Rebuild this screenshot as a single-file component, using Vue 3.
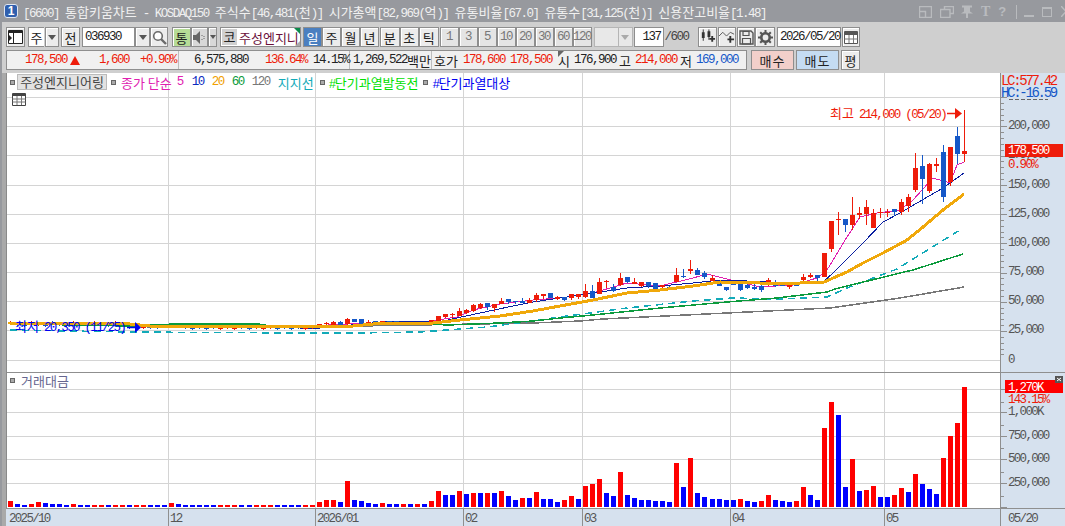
<script setup>
const barX = (i) => 10.5 + 7.015 * i

// title pieces, latin ones run in the half width font
const titleParts = [
  ['[6600] ', 1], ['통합키움차트', 0], [' - KOSDAQ150 ', 1], ['주식수', 0], ['[46,481(', 1], ['천', 0], [')] ', 1],
  ['시가총액', 0], ['[82,969(', 1], ['억', 0], [')] ', 1], ['유통비율', 0], ['[67.0] ', 1], ['유통수', 0], ['[31,125(', 1], ['천', 0], [')] ', 1],
  ['신용잔고비율', 0], ['[1.48]', 1],
]

// volume in 1/3 px, positive = up day, negative = down day
const vol = [
  18, -9, -6, 9, 15, -12, -9, -9, -6, 9, -6, -6, 6, 6, -6, 6, 6, -6, 6, 6, -6, -6, -6, 12, -9, -6, -6, -6, -6, -6, 6, 6, 6, -6, -6, 6, 6, 6, -6, -6, -6, -6, 6, 6,
  15, 21, 21, -15, 78, -21, -18, -12, -9, 12, -9, -9,
  9, -9, 9, -9, 18, 48, -36, -36, 48, -39, 42, -42, 42, -42, 48, -33, -21, 27, -27, 45, -24, -24, -15, 21, 33, -24, 63, 69, 84, -42, -33, 105, -36, -27, -21, -21, -18, -18, -15,
  132, -60, 147, -42, -30, -24, -24, -21, -21, 24, -18, -15, 18, 36, -21, -18, -15, 18,
  60, -36, -21, 237, 315, -276, -60, 144, -48, 51, 63, -30, -30, 36, 57, -45, 99, -69, -54, -39, 147, 213, 252, 360,
]
const volBars = vol.map((v, i) => ({
  x: Math.round(barX(i) - 2.5),
  y: 507 - Math.abs(v) / 3,
  h: Math.abs(v) / 3,
  color: v > 0 ? '#ff0000' : '#0000ff',
}))

// [top, bottom, high, low, colour] measured on three crops
const mkCandles = (list, start, base) =>
  list.map((c, k) => ({ i: start + k, top: base + c[0] / 3, bot: base + c[1] / 3, hi: base + c[2] / 3, lo: base + c[3] / 3, up: c[4] === 'r' }))

const early = mkCandles([
  [132, 144, 132, 144, 'r'], [129, 132, 126, 135, 'r'], [126, 135, 123, 135, 'r'], [126, 135, 123, 135, 'b'], [117, 132, 114, 135, 'r'],
  [117, 126, 117, 126, 'b'], [117, 132, 117, 132, 'b'], [125, 128, 120, 132, 'r'], [123, 129, 123, 129, 'b'], [124, 129, 124, 129, 'r'],
  [123, 132, 123, 132, 'b'], [123, 132, 123, 132, 'b'], [126, 135, 126, 135, 'b'], [129, 135, 129, 135, 'r'], [129, 131, 129, 135, 'r'],
  [126, 129, 126, 135, 'b'], [120, 129, 120, 132, 'r'], [108, 123, 108, 129, 'r'], [102, 111, 102, 114, 'r'], [101, 103, 99, 114, 'r'],
  [93, 108, 84, 108, 'r'], [90, 100, 87, 102, 'r'], [75, 93, 72, 96, 'r'], [72, 84, 69, 87, 'r'], [69, 81, 69, 90, 'b'],
  [72, 84, 72, 96, 'r'], [63, 72, 54, 72, 'r'], [57, 66, 57, 72, 'b'], [63, 66, 63, 72, 'b'], [63, 69, 54, 69, 'b'],
  [60, 69, 54, 69, 'r'], [45, 60, 39, 66, 'r'], [42, 48, 42, 57, 'r'], [39, 54, 39, 54, 'b'], [51, 57, 48, 60, 'r'],
], 44, 280)

const middle = mkCandles([
  [142, 149, 140, 152, 'b'], [132, 144, 132, 149, 'r'], [132, 140, 132, 146, 'r'], [123, 140, 102, 144, 'r'], [123, 143, 105, 143, 'b'],
  [96, 132, 84, 132, 'r'], [92, 95, 90, 114, 'r'], [111, 123, 102, 126, 'b'], [84, 106, 69, 108, 'r'], [81, 96, 81, 99, 'b'],
  [96, 101, 84, 101, 'r'], [96, 108, 96, 110, 'r'], [96, 108, 96, 114, 'b'], [99, 117, 99, 117, 'b'], [105, 112, 105, 117, 'r'],
  [111, 114, 108, 120, 'b'], [75, 96, 54, 96, 'r'], [78, 81, 57, 84, 'b'], [57, 63, 30, 72, 'r'], [60, 76, 54, 76, 'b'],
  [69, 81, 63, 87, 'b'], [84, 93, 75, 93, 'r'], [96, 108, 96, 108, 'b'], [111, 120, 111, 122, 'b'], [96, 105, 96, 105, 'b'],
  [99, 120, 93, 123, 'b'], [105, 114, 96, 117, 'b'], [111, 117, 102, 120, 'b'], [108, 120, 100, 126, 'b'], [90, 102, 84, 108, 'r'],
  [96, 108, 90, 111, 'b'], [99, 108, 99, 108, 'b'], [105, 112, 105, 117, 'r'], [99, 108, 99, 108, 'b'], [81, 90, 72, 96, 'r'],
  [75, 81, 69, 84, 'r'], [75, 84, 75, 93, 'b'],
], 79, 250)

const late = mkCandles([
  [459, 531, 459, 531, 'r'], [363, 446, 363, 455, 'r'], [357, 361, 337, 405, 'r'], [357, 375, 357, 395, 'b'], [345, 375, 291, 390, 'r'],
  [340, 345, 322, 357, 'r'], [322, 342, 300, 375, 'r'], [340, 384, 328, 384, 'r'], [336, 340, 324, 354, 'r'], [335, 340, 327, 352, 'r'],
  [327, 336, 327, 348, 'b'], [306, 336, 297, 345, 'r'], [292, 318, 282, 335, 'r'], [204, 270, 159, 275, 'r'], [198, 237, 165, 311, 'b'],
  [192, 273, 189, 278, 'r'], [192, 198, 174, 216, 'r'], [156, 291, 135, 306, 'b'], [141, 246, 141, 258, 'r'], [108, 162, 81, 192, 'b'],
  [153, 161, 30, 186, 'r'],
], 116, 100)

const flat = Array.from({ length: 44 }, (_, i) => {
  const y = i < 17 ? 322 + (i % 3) : i < 22 ? 326 : i < 25 ? 325 : 327 - (i % 2)
  return { i, top: y, bot: y + 2, hi: y - 1, lo: y + 3, up: vol[i] > 0 }
})

const candles = [...flat, ...early.slice(0, 35), ...middle, ...late]
  .map((c) => ({ ...c, x: Math.round(barX(c.i) - 2.5), color: c.up ? '#ee1c0a' : '#1558c8' }))

const ma5 = '328,325 367,323 417,323 457,317 473,310 500,304 533,300 560,298 593,293 627,283 660,286 693,278 707,274 727,279 760,287 793,285 817,278 827,270 847,237 860,217 877,213 900,210 913,200 933,178 950,183 957,165 964,162'
const ma10 = '300,328 320,328 383,322 443,321 480,313 513,306 533,302 560,298 593,293 627,288 660,286 693,283 720,280 747,281 793,283 813,282 824,281 833,273 863,243 883,222 900,213 910,207 943,188 964,173'
const ma20 = '8,323 130,324 150,326 300,326 353,326 383,323 433,323 460,320 500,316 533,311 560,306 593,300 627,293 660,290 693,286 720,282 760,283 800,283 824,282 847,272 863,263 883,253 907,240 923,227 943,210 964,194'
const ma60 = '20,324 130,326 175,324 258,324 270,326 350,326 383,324 430,324 447,325 500,323 533,321 560,318 593,315 660,308 727,302 777,298 827,292 835,289 900,273 913,270 963,254'
const ma120 = '147,327 300,327 477,324 533,323 580,321 603,319 727,313 830,308 900,298 964,287'
const support = '10,330 127,332 300,333 357,333 420,332 487,327 533,321 560,317 627,308 693,301 733,298 777,299 827,297 847,288 897,269 963,228'

const priceGrid = [97, 126, 155, 185, 214, 243, 272, 301, 330, 360]
const volGrid = [389, 412, 436, 459, 483]
const vGrid = [168, 315, 463, 582, 730, 884]
const priceLabels = [
  ['200,000', 129], ['175,000', 158], ['150,000', 188], ['125,000', 217], ['100,000', 246],
  ['75,000', 275], ['50,000', 304], ['25,000', 333], ['0', 363],
]
const volLabels = [['1,000K', 415], ['750,000', 439], ['500,000', 462], ['250,000', 486]]
const dateLabels = [['2025/10', 9], ['12', 170], ['2026/01', 317], ['02', 465], ['03', 584], ['04', 732], ['05', 886]]

const priceTicks = Array.from({ length: 45 }, (_, k) => ({ y: Math.round(97 + k * 5.85), major: k % 5 === 0 }))
const volTicks = [389, 402, 412, 425, 436, 448, 459, 472, 483, 496, 507]

const periods = ['일', '주', '월', '년']
const units = ['분', '초', '틱']
const minutes = ['1', '3', '5', '10', '20', '30', '60', '120']
</script>

<template>
  <div class="window">
    <header class="titlebar">
      <span class="badge">1</span>
      <span class="title"><span v-for="(p, k) in titleParts" :key="k" :class="{ n: p[1] }">{{ p[0] }}</span></span>
      <div class="win-btns">
        <svg width="13" height="12" viewBox="0 0 13 12" class="w1"><path d="M.5.5h12v11H.5zM.5 5.500h6v6" fill="none" stroke="#b9bbbe" stroke-width="1.4" /></svg>
        <svg width="14" height="12" viewBox="0 0 14 12" class="w2"><path d="M4.500 3V.5h9v7h-3M.5 3.500h9.500v8H.5z" fill="none" stroke="#b9bbbe" stroke-width="1.4" /></svg>
        <svg width="12" height="13" viewBox="0 0 12 13" class="w3"><path d="M1 .5h10v2H9v4l3 2H7v4.500H5V8.500H0l3-2v-4H1z" fill="#b9bbbe" /></svg>
        <span class="w-t">T</span>
        <span class="w-q">?</span>
        <i class="w-div"></i>
        <i class="w-min"></i>
        <i class="w-max"></i>
        <svg width="10" height="11" viewBox="0 0 10 11" class="w-x"><path d="M0 0l10 11M10 0L0 11" stroke="#b9bbbe" stroke-width="1.5" /></svg>
      </div>
    </header>

    <section class="toolbar">
      <div class="row">
        <button class="btn b-layout">
          <svg width="15" height="14" viewBox="0 0 15 14"><path d="M.5.5h14v13H.5z" fill="#fff" stroke="#222" /><path d="M1 1h13v2H1z" fill="#222" /><path d="M5.500 3v10" stroke="#222" /><path d="M1 5l3 3-3 3z" fill="#222" /></svg>
        </button>
        <div class="field f-ju">주</div>
        <button class="btn arrow b-ar1"><i class="tri"></i></button>
        <button class="btn b-jeon">전</button>
        <div class="field f-code n">036930</div>
        <button class="btn arrow b-ar2"><i class="tri"></i></button>
        <button class="btn b-search">
          <svg width="15" height="15" viewBox="0 0 15 15"><circle cx="6" cy="6" r="4.300" fill="#fff" stroke="#6a6a6a" stroke-width="1.600" /><path d="M9 9l5 5" stroke="#6a6a6a" stroke-width="2.400" /></svg>
        </button>
        <button class="btn b-tong">통</button>
        <button class="btn b-sound">
          <svg width="13" height="13" viewBox="0 0 13 13"><path d="M0 4h3l4-4v13L3 9H0z" fill="#666" /><path d="M9 4v1M9 8v1M11 5v1M11 7v1" stroke="#666" /></svg>
        </button>
        <button class="btn arrow b-ar3"><i class="tri small"></i></button>
        <div class="stock">
          <span class="stock-k">코</span>
          <span class="stock-name">주성엔지니</span>
          <i class="corner-a"></i>
          <i class="corner-b"></i>
        </div>
        <div class="btn-group g-period">
          <button v-for="(p, k) in periods" :key="p" class="btn seg" :class="{ active: k === 0 }">{{ p }}</button>
        </div>
        <div class="btn-group g-unit">
          <button v-for="u in units" :key="u" class="btn seg">{{ u }}</button>
        </div>
        <div class="btn-group g-min">
          <button v-for="m in minutes" :key="m" class="btn seg mute n">{{ m }}</button>
        </div>
        <div class="blank-combo">
          <span class="blank-box"></span>
          <span class="blank-arrow"><i class="tri light"></i></span>
        </div>
        <div class="field f-count n">137</div>
        <span class="slash n">/600</span>
        <button class="btn b-ico i1">
          <svg width="18" height="16" viewBox="0 0 18 16"><path d="M3 3h3v6H3zM9 2h3v6H9z" fill="#333" /><path d="M4.500 0v12M10.500 0v11" stroke="#333" /><path d="M14 7v6M11 10h6" stroke="#333" stroke-width="2" /></svg>
        </button>
        <button class="btn b-ico i2">
          <svg width="17" height="16" viewBox="0 0 17 16"><path d="M0 7l4-4 4 4 4-4 4 2" fill="none" stroke="#555" /><path d="M12 7v7M9 10.500h7" stroke="#333" stroke-width="2" /></svg>
        </button>
        <button class="btn b-ico i3">
          <svg width="15" height="15" viewBox="0 0 15 15"><path d="M1 1h11l2 2v11H1z" fill="#ececec" stroke="#555" stroke-width="1.400" /><path d="M4 1.500h6v4H4zM3.500 8.500h8V14h-8z" fill="none" stroke="#555" stroke-width="1.200" /></svg>
        </button>
        <button class="btn b-ico i4">
          <svg width="15" height="15" viewBox="0 0 15 15"><circle cx="7.500" cy="7.500" r="4.200" fill="none" stroke="#555" stroke-width="2.600" /><path d="M7.500 0v3M7.500 12v3M0 7.500h3M12 7.500h3M2.200 2.200l2 2M10.800 10.800l2 2M12.800 2.200l-2 2M4.200 10.800l-2 2" stroke="#555" stroke-width="2" /></svg>
        </button>
        <div class="field f-date n">2026/05/20</div>
        <button class="btn b-cal">
          <svg width="14" height="13" viewBox="0 0 14 13"><path d="M.5 .5h13v12H.5z" fill="#fff" stroke="#555" /><path d="M1 1h12v3H1z" fill="#555" /><path d="M.5 8h13M5 4v8M9.500 4v8" stroke="#777" /></svg>
        </button>
      </div>

      <div class="row">
        <div class="quote">
          <div class="q-cell q-a">
            <span class="n up">178,500</span>
            <i class="tri-up"></i>
            <span class="n up q2">1,600</span>
            <span class="n up q3">+0.90%</span>
          </div>
          <div class="q-cell q-b">
            <span class="n">6,575,880</span>
            <span class="n up q5">136.64%</span>
            <span class="n q6">14.15%</span>
          </div>
          <div class="q-cell q-c"><span class="n">1,269,522</span><span>백만</span></div>
          <div class="q-cell q-d">
            <span>호가</span>
            <span class="n up q7">178,600</span>
            <span class="n up q7">178,500</span>
            <span class="q9">시</span>
            <span class="n q10">176,900</span>
            <span class="q11">고</span>
            <span class="n up q10">214,000</span>
            <span class="q11">저</span>
            <span class="n down q10">169,000</span>
            <i class="mark"></i>
          </div>
        </div>
        <button class="trade buy">매수</button>
        <button class="trade sell">매도</button>
        <button class="btn b-pyeong">평</button>
      </div>
    </section>

    <section class="chart">
      <svg class="plot" width="1065" height="453" viewBox="0 73 1065 453">
        <rect x="0" y="73" width="1065" height="453" fill="#fff" />
        <rect x="0" y="73" width="6" height="453" fill="#a9a9a9" />
        <rect x="0" y="73" width="2" height="453" fill="#97999e" />
        <path d="M6.500 73v435" stroke="#8a8a8a" />
        <g stroke="#d4d4d4" shape-rendering="crispEdges">
          <path v-for="y in priceGrid" :key="'p' + y" :d="`M7 ${y}.5H1000`" />
          <path v-for="y in volGrid" :key="'v' + y" :d="`M7 ${y}.5H1000`" />
          <path v-for="x in vGrid" :key="'x' + x" :d="`M${x}.5 73V508`" />
        </g>

        <g fill="none" shape-rendering="crispEdges">
          <polyline :points="ma5" stroke="#e020b0" />
          <polyline :points="ma10" stroke="#0a1fa0" />
        </g>
        <g shape-rendering="crispEdges">
          <template v-for="c in candles" :key="c.i">
            <rect :x="c.x + 2" :y="c.hi" width="1" :height="c.lo - c.hi" :fill="c.color" />
            <rect :x="c.x" :y="c.top" width="5" :height="Math.max(c.bot - c.top, 1)" :fill="c.color" />
          </template>
        </g>
        <g fill="none" shape-rendering="crispEdges">
          <polyline :points="ma120" stroke="#777" stroke-width="1.500" />
          <polyline :points="support" stroke="#12aab8" stroke-width="1.500" stroke-dasharray="7 5" />
          <polyline :points="ma60" stroke="#0b9a3c" stroke-width="1.500" />
          <polyline :points="ma20" stroke="#f0a80a" stroke-width="3" />
        </g>

        <text x="15" y="331" class="t t-low"><tspan class="k">최저</tspan><tspan dx="5">20,350 (11/25)</tspan></text>
        <path d="M127 327.500h8" stroke="#0000f0" stroke-width="1.500" />
        <path d="M135 322l6 5.500-6 5.500z" fill="#0000f0" />

        <text x="830" y="118" class="t t-high"><tspan class="k">최고</tspan><tspan dx="5">214,000 (05/20)</tspan></text>
        <path d="M947 113.500h9" stroke="#ee1c0a" stroke-width="1.500" />
        <path d="M955 108l7 5.500-7 5.500z" fill="#ee1c0a" />

        <rect v-for="(b, i) in volBars" :key="'b' + i" :x="b.x" :y="b.y" width="5" :height="b.h" :fill="b.color" shape-rendering="crispEdges" />

        <path d="M7 372.500H1001" stroke="#8f8f8f" shape-rendering="crispEdges" />

        <rect x="1001" y="73" width="64" height="453" fill="#d6e1ee" />
        <rect x="0" y="509" width="1065" height="17" fill="#d6e1ee" />
        <rect x="0" y="509" width="6" height="17" fill="#a9a9a9" />
        <rect x="0" y="509" width="2" height="17" fill="#97999e" />
        <g stroke="#8f8f8f" shape-rendering="crispEdges">
          <path d="M6 508.500H1065" />
          <path d="M1000.500 73V526" />
          <path d="M1001 372.500H1065" />
          <path v-for="x in vGrid" :key="'d' + x" :d="`M${x}.5 509V526`" />
          <path v-for="t in priceTicks" :key="'pt' + t.y" :d="`M1001 ${t.y}.5h${t.major ? 6 : 3}`" />
          <path v-for="(y, k) in volTicks" :key="'vt' + y" :d="`M1001 ${y}.5h${k % 2 ? 3 : 6}`" />
        </g>
        <!-- bottom of the 225,000 label, the LC/HC box hides the rest -->
        <path d="M1009 99.500h39" stroke="#666" stroke-dasharray="4 2" shape-rendering="crispEdges" />

        <text v-for="l in priceLabels" :key="l[0]" :x="1008" :y="l[1]" class="t t-axis">{{ l[0] }}</text>
        <text v-for="l in volLabels" :key="l[0]" :x="1008" :y="l[1]" class="t t-axis">{{ l[0] }}</text>
        <text v-for="l in dateLabels" :key="l[0]" :x="l[1]" y="522" class="t t-axis">{{ l[0] }}</text>
        <text x="1008" y="522" class="t t-axis">05/20</text>

        <text x="1001" y="85" class="t t-lc">LC:577.42</text>
        <text x="1001" y="97" class="t t-hc">HC:-16.59</text>

        <rect x="1005" y="144" width="58" height="13" fill="#ee1c0a" />
        <text x="1008" y="154" class="t t-tag">178,500</text>
        <text x="1008" y="168" class="t t-red">0.90%</text>

        <rect x="1005" y="380" width="58" height="13" fill="#ff0000" />
        <text x="1008" y="391" class="t t-tag">1,270K</text>
        <text x="1008" y="403" class="t t-red">143.15%</text>
        <rect x="1055" y="376" width="8" height="7" fill="#555" />
        <path d="M1057 378l4 3M1061 378l-4 3" stroke="#fff" />
      </svg>

      <div class="legend">
        <i class="bullet"></i>
        <span class="leg-name">주성엔지니어링</span>
        <i class="bullet b2"></i>
        <span class="c-mag l1">종가 단순</span>
        <span class="c-mag n l0">5</span>
        <span class="c-navy n l9">10</span>
        <span class="c-org n l2">20</span>
        <span class="c-grn n l2">60</span>
        <span class="c-gry n l2">120</span>
        <span class="c-cyan l2">지지선</span>
        <i class="bullet b3"></i>
        <span class="c-lime l3"><span class="n">#</span>단기과열발동전</span>
        <i class="bullet b4"></i>
        <span class="c-blue l3"><span class="n">#</span>단기과열대상</span>
      </div>
      <svg class="grid-ico" width="14" height="13" viewBox="0 0 14 13"><path d="M.5.5h13v12H.5z" fill="#fff" stroke="#444" /><path d="M1 1h12v2H1z" fill="#444" /><path d="M.5 6h13M.5 9h13M5 3v9M9.500 3v9" stroke="#777" /></svg>
      <div class="vol-title"><i class="bullet"></i><span>거래대금</span></div>
    </section>
  </div>
</template>

<style>
html,
body {
  margin: 0;
  overflow: hidden;
  background: #cfcfcf;
}
</style>

<style scoped>
.window {
  width: 1065px;
  height: 526px;
  display: flex;
  flex-direction: column;
  overflow: hidden;
  font-family: "Noto Sans CJK KR", sans-serif;
  font-size: 13px;
  color: #222;
  background: #cfcfcf;
}
button {
  font: inherit;
  color: inherit;
  padding: 0;
}
/* half width digits, six pixels per character */
.n {
  font-family: "Liberation Mono", monospace;
  font-size: 12.500px;
  letter-spacing: -1.500px;
}

/* title bar */
.titlebar {
  height: 22px;
  flex: none;
  background: #97999e;
  display: flex;
  align-items: center;
  padding-left: 4px;
  position: relative;
}
.badge {
  width: 12px;
  height: 12px;
  border: 1px solid #dfe6f2;
  border-radius: 3px;
  background: #2f5fae;
  color: #fff;
  font: bold 12px/12px "Liberation Sans", sans-serif;
  text-align: center;
}
.title {
  margin-left: 5px;
  color: #f0f0f0;
  font-size: 13px;
  white-space: pre;
}
.win-btns {
  position: absolute;
  left: 919px;
  top: 5px;
  display: flex;
  align-items: center;
  height: 13px;
}
.w2 { margin-left: 8px; }
.w3 { margin-left: 7px; }
.w-t {
  margin-left: 8px;
  color: #b9bbbe;
  font: bold 14px "Liberation Serif", serif;
}
.w-q {
  margin-left: 8px;
  color: #b9bbbe;
  font: bold 13px "Liberation Sans", sans-serif;
}
.w-div { margin-left: 10px; width: 1px; height: 14px; background: #b9bbbe; }
.w-min { margin: 9px 0 0 7px; width: 10px; height: 2px; background: #b9bbbe; }
.w-max { margin-left: 8px; width: 8px; height: 7px; border: 1px solid #b9bbbe; border-top-width: 2px; }
.w-x { margin-left: 9px; }

/* toolbar */
.toolbar {
  height: 51px;
  flex: none;
  padding: 5px 0 0 6px;
  box-sizing: border-box;
  box-shadow: inset 2px 0 #97999e;
}
.row {
  display: flex;
  height: 20px;
  margin-bottom: 3px;
}
.btn {
  height: 20px;
  box-sizing: border-box;
  border: 1px solid #8e8e8e;
  background: #ececec;
  box-shadow: inset 1px 1px #fff;
  display: flex;
  align-items: center;
  justify-content: center;
  flex: none;
}
.field {
  height: 20px;
  box-sizing: border-box;
  border: 1px solid #8e8e8e;
  background: #fff;
  display: flex;
  align-items: center;
  flex: none;
}
.tri {
  width: 0;
  height: 0;
  border: 4px solid transparent;
  border-top: 5px solid #555;
  border-bottom: 0;
}
.tri.small { border-width: 3px; border-top-width: 4px; border-bottom: 0; }
.tri.light { border-top-color: #aaa; }
.b-layout { width: 19px; }
.f-ju { width: 16px; margin-left: 3px; justify-content: center; border-right: 0; }
.b-ar1 { width: 14px; margin-left: 1px; }
.b-jeon { width: 19px; margin-left: 2px; }
.f-code { width: 53px; margin-left: 2px; padding-left: 2px; }
.b-ar2 { width: 15px; }
.b-search { width: 18px; }
.b-tong { width: 19px; margin-left: 4px; background: #b6dc96; }
.b-sound { width: 17px; background: #d8d8d8; }
.b-ar3 { width: 9px; background: #d8d8d8; }
.stock {
  width: 81px;
  height: 20px;
  margin-left: 3px;
  box-sizing: border-box;
  border: 1px solid #8e8e8e;
  background: #fff;
  display: flex;
  align-items: center;
  position: relative;
  flex: none;
  overflow: hidden;
}
.stock-k {
  width: 15px;
  height: 16px;
  margin-left: 1px;
  background: #d0d0d0;
  text-align: center;
  line-height: 16px;
}
.stock-name {
  margin-left: 2px;
  color: #6a0f3a;
  white-space: nowrap;
}
.corner-a {
  position: absolute;
  right: 0;
  top: 0;
  border-left: 6px solid transparent;
  border-top: 6px solid #0a8a4a;
}
.corner-b {
  position: absolute;
  right: 0;
  bottom: 0;
  border-left: 5px solid transparent;
  border-bottom: 5px solid #aaa;
}
.btn-group { display: flex; flex: none; }
.g-period { margin-left: 2px; }
.g-period .seg { width: 19px; }
.g-unit { margin-left: 1px; }
.g-unit .seg { width: 19.500px; }
.g-min { margin-left: 1px; }
.g-min .seg { width: 19px; }
.seg { background: #ececec; }
.seg.active { background: #4a7fc0; color: #fff; box-shadow: none; }
.seg.mute { color: #777; background: #e4e4e4; }
.blank-combo {
  display: flex;
  width: 39px;
  height: 20px;
  margin-left: 2px;
  flex: none;
  box-sizing: border-box;
  border: 1px solid #b5b5b5;
  background: #e8e8e8;
}
.blank-box { flex: 1; }
.blank-arrow {
  width: 13px;
  border-left: 1px solid #b5b5b5;
  display: flex;
  align-items: center;
  justify-content: center;
}
.f-count { width: 30px; margin-left: 1px; padding-right: 2px; justify-content: flex-end; }
.slash { width: 33.500px; margin-left: 1px; line-height: 20px; flex: none; color: #444; }
.b-ico { width: 19px; }
.i2 { margin-left: 1px; width: 18px; }
.i3 { margin-left: 1px; width: 18px; }
.i4 { width: 20px; }
.f-date { width: 64px; margin-left: 2px; padding-left: 2px; }
.b-cal { width: 18px; margin-left: 1px; }

/* quote strip */
.quote {
  width: 741px;
  height: 20px;
  box-sizing: border-box;
  border: 1px solid #8e8e8e;
  background: #f0f0f0;
  display: flex;
  align-items: center;
  flex: none;
  white-space: nowrap;
}
.q-cell {
  display: flex;
  align-items: center;
  height: 18px;
  box-sizing: border-box;
  border-right: 1px solid #bdbdbd;
  flex: none;
}
.q-a { width: 172px; padding-left: 18px; }
.q-b { width: 171px; padding-left: 15px; }
.q-c { width: 82px; padding-left: 3px; }
.q-d { flex: 1; padding-left: 2px; border-right: 0; position: relative; }
.up { color: #ee1c0a; }
.down { color: #1558c8; }
.tri-up {
  margin-left: 3px;
  border: 5px solid transparent;
  border-bottom: 9px solid #ee1c0a;
  border-top: 0;
}
.q2 { margin-left: 19px; }
.q3 { margin-left: 11px; }
.q5 { margin-left: 17px; }
.q6 { margin-left: 6px; }
.q7 { margin-left: 5px; }
.q9 { margin-left: 6px; }
.q10 { margin-left: 4px; }
.q11 { margin-left: 3px; }
.mark {
  position: absolute;
  left: 126px;
  top: 0;
  border-right: 6px solid transparent;
  border-top: 6px solid #666;
}
.trade {
  width: 43px;
  height: 20px;
  margin-left: 4px;
  box-sizing: border-box;
  border: 1px solid #8e8e8e;
  letter-spacing: 1px;
  flex: none;
}
.buy { background: #f2cfca; }
.sell { margin-left: 2px; background: #c5dcf2; }
.b-pyeong { width: 19px; margin-left: 2px; }

/* chart */
.chart {
  position: relative;
  flex: 1;
  min-height: 0;
}
.plot { display: block; }
.t {
  font-family: "Liberation Mono", monospace;
  font-size: 12.500px;
  letter-spacing: -1.700px;
}
.k { font-family: "Noto Sans CJK KR", sans-serif; font-size: 13px; letter-spacing: 0; }
.t-axis { fill: #555; }
.t-low { fill: #0000f0; }
.t-high { fill: #ee1c0a; }
.t-lc { fill: #ee1c0a; font-size: 14px; letter-spacing: -2.300px; }
.t-hc { fill: #1558c8; font-size: 14px; letter-spacing: -2.300px; }
.t-tag { fill: #fff; }
.t-red { fill: #ee1c0a; }
.legend {
  position: absolute;
  left: 10px;
  top: 0;
  display: flex;
  align-items: center;
  height: 18px;
  white-space: nowrap;
}
.bullet {
  display: inline-block;
  width: 3px;
  height: 3px;
  border: 1px solid #666;
  background: #aaa;
  flex: none;
}
.b2 { margin-left: 4px; }
.b3 { margin-left: 6px; }
.b4 { margin-left: 5px; }
.leg-name {
  width: 90px;
  height: 16px;
  margin-left: 2px;
  box-sizing: border-box;
  border: 1px solid #bbb;
  background: #e2e2e2;
  color: #444;
  text-align: center;
  line-height: 14px;
}
.l0 { margin-left: 5px; }
.l9 { margin-left: 9px; }
.l1 { margin-left: 5px; }
.l2 { margin-left: 8px; }
.l3 { margin-left: 4px; }
.c-mag { color: #e020b0; }
.c-navy { color: #0a2ac0; }
.c-org { color: #f0a000; }
.c-grn { color: #0b9a3c; }
.c-gry { color: #777; }
.c-cyan { color: #12aab8; }
.c-lime { color: #00e000; }
.c-blue { color: #0000f0; }
.grid-ico {
  position: absolute;
  left: 12px;
  top: 20px;
}
.vol-title {
  position: absolute;
  left: 10px;
  top: 298px;
  display: flex;
  align-items: center;
  color: #66668f;
}
.vol-title span { margin-left: 6px; }
</style>
